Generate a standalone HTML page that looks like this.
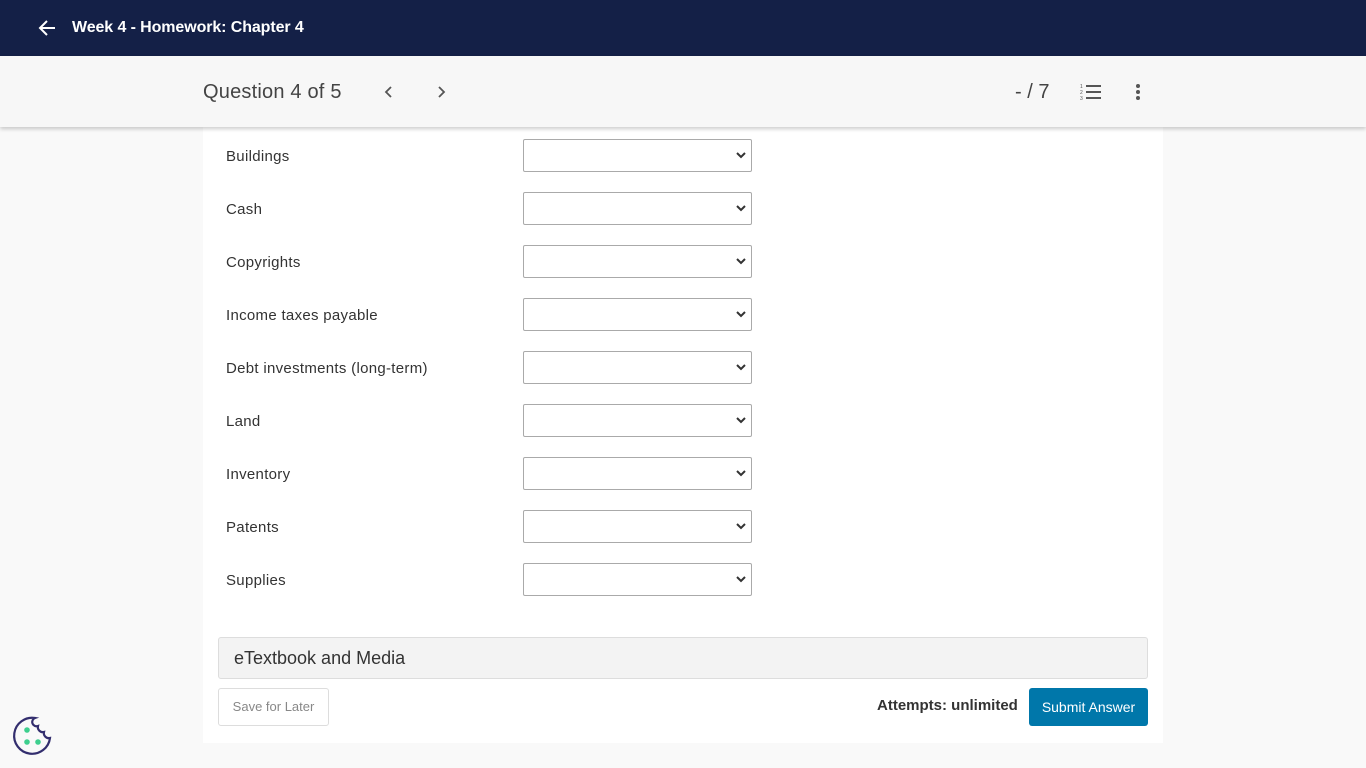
<!DOCTYPE html>
<html><head><meta charset="utf-8"><style>
*{margin:0;padding:0;box-sizing:border-box}
body{width:1366px;height:768px;background:#f9f9f9;font-family:"Liberation Sans",sans-serif;position:relative;overflow:hidden}
.top{position:absolute;left:0;top:0;width:1366px;height:56px;background:#142047;color:#fff}
.top .t{position:absolute;left:72px;top:19px;font-size:16px;font-weight:bold;letter-spacing:-0.1px}
.sub{position:absolute;left:0;top:56px;width:1366px;height:71px;background:#f7f7f7;box-shadow:0 2px 4px rgba(0,0,0,.2);z-index:2}
.q{position:absolute;left:203px;top:25px;font-size:20px;color:#444;letter-spacing:0.2px}
.pts{position:absolute;left:1015px;top:25px;font-size:20px;color:#444}
.panel{position:absolute;left:203px;top:127px;width:960px;height:616px;background:#fff}
.lab{position:absolute;left:226px;font-size:15px;color:#333;letter-spacing:0.3px}
.sel{position:absolute;left:523px;width:229px;height:33px;border:1px solid #aaa;border-radius:2px;background:#fff}
.sel svg{position:absolute;right:5px;top:12px}
.et{position:absolute;left:218px;top:637px;width:930px;height:42px;background:#f3f3f3;border:1px solid #ddd;border-radius:3px;font-size:18px;color:#333;padding:10px 15px}
.save{position:absolute;left:218px;top:688px;width:111px;height:38px;border:1px solid #ddd;border-radius:3px;background:#fff;color:#888;font-size:13px;text-align:center;line-height:36px}
.att{position:absolute;left:877px;top:697px;font-size:15px;font-weight:bold;color:#333}
.sub2{position:absolute;left:1029px;top:688px;width:119px;height:38px;background:#0077aa;border-radius:3px;color:#fff;font-size:14px;text-align:center;line-height:38px}
</style></head><body>
<div class="top">
<svg style="position:absolute;left:38px;top:19px" width="18" height="18" viewBox="0 0 18 18"><path d="M17 9H2M9 2L2 9l7 7" stroke="#fff" stroke-width="2" fill="none"/></svg>
<div class="t">Week 4 - Homework: Chapter 4</div></div>
<div class="sub">
<div class="q">Question 4 of 5</div>
<svg style="position:absolute;left:384px;top:30px" width="10" height="12"><path d="M7 1L2 6l5 5" stroke="#555" stroke-width="1.8" fill="none"/></svg>
<svg style="position:absolute;left:436px;top:30px" width="10" height="12"><path d="M3 1l5 5-5 5" stroke="#555" stroke-width="1.8" fill="none"/></svg>
<div class="pts">- / 7</div>
<svg style="position:absolute;left:1080px;top:27px" width="22" height="18"><text x="0" y="5" font-size="5" fill="#555">1</text><text x="0" y="11" font-size="5" fill="#555">2</text><text x="0" y="17" font-size="5" fill="#555">3</text><rect x="6" y="2" width="15" height="2" fill="#555"/><rect x="6" y="8" width="15" height="2" fill="#555"/><rect x="6" y="14" width="15" height="2" fill="#555"/></svg>
<svg style="position:absolute;left:1135px;top:27px" width="6" height="18"><circle cx="3" cy="3" r="2" fill="#555"/><circle cx="3" cy="9" r="2" fill="#555"/><circle cx="3" cy="15" r="2" fill="#555"/></svg>
</div>
<div class="panel"></div>
<div class="lab" style="top:148px">Buildings</div>
<div class="lab" style="top:201px">Cash</div>
<div class="lab" style="top:254px">Copyrights</div>
<div class="lab" style="top:307px">Income taxes payable</div>
<div class="lab" style="top:360px">Debt investments (long-term)</div>
<div class="lab" style="top:413px">Land</div>
<div class="lab" style="top:466px">Inventory</div>
<div class="lab" style="top:519px">Patents</div>
<div class="lab" style="top:572px">Supplies</div>
<div class="sel" style="top:139px"><svg width="10" height="8"><path d="M1 1l4 4 4-4" stroke="#333" stroke-width="2" fill="none"/></svg></div>
<div class="sel" style="top:192px"><svg width="10" height="8"><path d="M1 1l4 4 4-4" stroke="#333" stroke-width="2" fill="none"/></svg></div>
<div class="sel" style="top:245px"><svg width="10" height="8"><path d="M1 1l4 4 4-4" stroke="#333" stroke-width="2" fill="none"/></svg></div>
<div class="sel" style="top:298px"><svg width="10" height="8"><path d="M1 1l4 4 4-4" stroke="#333" stroke-width="2" fill="none"/></svg></div>
<div class="sel" style="top:351px"><svg width="10" height="8"><path d="M1 1l4 4 4-4" stroke="#333" stroke-width="2" fill="none"/></svg></div>
<div class="sel" style="top:404px"><svg width="10" height="8"><path d="M1 1l4 4 4-4" stroke="#333" stroke-width="2" fill="none"/></svg></div>
<div class="sel" style="top:457px"><svg width="10" height="8"><path d="M1 1l4 4 4-4" stroke="#333" stroke-width="2" fill="none"/></svg></div>
<div class="sel" style="top:510px"><svg width="10" height="8"><path d="M1 1l4 4 4-4" stroke="#333" stroke-width="2" fill="none"/></svg></div>
<div class="sel" style="top:563px"><svg width="10" height="8"><path d="M1 1l4 4 4-4" stroke="#333" stroke-width="2" fill="none"/></svg></div>
<div class="et">eTextbook and Media</div>
<div class="save">Save for Later</div>
<div class="att">Attempts: unlimited</div>
<div class="sub2">Submit Answer</div>
<svg style="position:absolute;left:11px;top:715px" width="42" height="42" viewBox="0 0 42 42"><path d="M24 3A18 18 0 1 0 39 23 5 5 0 0 1 33 17 5 5 0 0 1 27 11 4 4 0 0 1 24 3Z" stroke="#332e6e" stroke-width="2.2" fill="none"/><circle cx="16" cy="15" r="2.8" fill="#3ecf8e"/><circle cx="16" cy="27" r="2.8" fill="#3ecf8e"/><circle cx="27" cy="27" r="2.8" fill="#3ecf8e"/></svg>
</body></html>
